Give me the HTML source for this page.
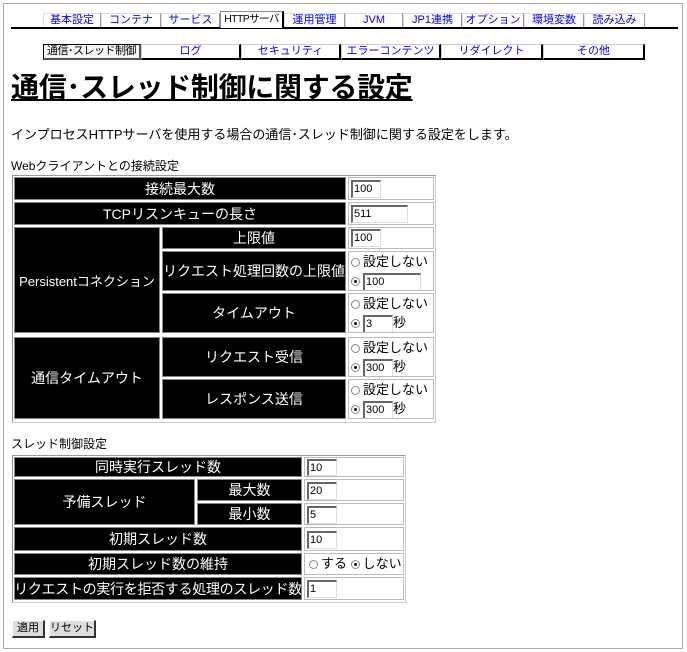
<!DOCTYPE html>
<html><head><meta charset="utf-8">
<style>
*{margin:0;padding:0;box-sizing:border-box}
body{width:687px;height:652px;background:#fff;font-family:"Liberation Sans","Noto Sans CJK JP",sans-serif;position:relative;overflow:hidden;color:#000}
.a{position:absolute}
.frame{left:3px;top:3px;width:680px;height:646px;border:1px solid #aaa}
.tab{position:absolute;top:13px;height:15px;border-top:1px solid #ddd;border-left:1px solid #ddd;border-right:1px solid #999;font-size:11px;color:#00f;text-align:center;line-height:13px;background:#fff;white-space:nowrap;overflow:hidden}
.tab.on{color:#000;top:11px;height:17px;border-top:1px solid #888;border-left:1px solid #888;border-right:2px solid #000;z-index:2;background:#fff;letter-spacing:-0.6px;font-size:10.5px;line-height:15px}
.line{left:11px;top:27px;width:667px;height:2px;background:#000}
.sub{position:absolute;top:44px;height:16px;border-top:1px solid #ccc;border-left:1px solid #ccc;border-right:2px solid #000;border-bottom:2px solid #000;font-size:11px;color:#00f;text-align:center;line-height:13px;white-space:nowrap;overflow:hidden}
.sub.on{color:#000;border:1px solid #000;border-right:2px solid #555;border-bottom:2px solid #555;background:#f4f4f4;letter-spacing:-0.5px}
.L{position:absolute;background:#000;color:#fff;font-size:14px;display:flex;align-items:center;justify-content:center;border:1px solid #888;white-space:nowrap;overflow:hidden}
.V{position:absolute;background:#fff;border:1px solid #bbb;font-size:13px;padding-left:2px;overflow:hidden}
.in{display:inline-block;border-top:2px solid #666;border-left:2px solid #666;border-right:1px solid #ddd;border-bottom:1px solid #ddd;height:18px;font-size:11px;line-height:14px;padding-left:1px;vertical-align:middle;background:#fff}
.r{display:inline-block;width:9px;height:9px;border:1px solid #888;border-radius:50%;margin-right:3px;vertical-align:middle;position:relative}
.r.c::after{content:"";position:absolute;left:2px;top:2px;width:3px;height:3px;background:#000;border-radius:50%}
.ln{height:19px;line-height:19px;white-space:nowrap}
.tb{position:absolute;border:1px solid #999;border-right-color:#ccc;border-bottom-color:#ccc}
.btn{position:absolute;top:620px;height:18px;background:#ddd;border:1px solid #fff;border-right:2px solid #333;border-bottom:2px solid #333;font-size:11px;text-align:center;line-height:15px;white-space:nowrap}
</style></head><body>
<div class="a frame"></div>
<div class="tab" style="left:43px;width:58px">基本設定</div>
<div class="tab" style="left:101px;width:60px">コンテナ</div>
<div class="tab" style="left:161px;width:59px">サービス</div>
<div class="tab on" style="left:220px;width:64px">HTTPサーバ</div>
<div class="tab" style="left:284px;width:61px">運用管理</div>
<div class="tab" style="left:345px;width:58px">JVM</div>
<div class="tab" style="left:403px;width:59px">JP1連携</div>
<div class="tab" style="left:462px;width:62px">オプション</div>
<div class="tab" style="left:524px;width:60px">環境変数</div>
<div class="tab" style="left:584px;width:61px">読み込み</div>
<div class="a line"></div>

<div class="sub on" style="left:43px;width:98px">通信･スレッド制御</div>
<div class="sub" style="left:141px;width:100px">ログ</div>
<div class="sub" style="left:241px;width:100px">セキュリティ</div>
<div class="sub" style="left:341px;width:100px">エラーコンテンツ</div>
<div class="sub" style="left:441px;width:102px">リダイレクト</div>
<div class="sub" style="left:543px;width:102px">その他</div>

<div class="a" style="left:11px;top:70px;font-size:28px;font-weight:bold;text-decoration:underline;line-height:36px;white-space:nowrap;letter-spacing:-0.3px">通信･スレッド制御に関する設定</div>
<div class="a" style="left:11px;top:124px;font-size:13px;white-space:nowrap">インプロセスHTTPサーバを使用する場合の通信･スレッド制御に関する設定をします。</div>
<div class="a" style="left:11px;top:157px;font-size:12px;white-space:nowrap">Webクライアントとの接続設定</div>

<div class="tb" style="left:12px;top:175px;width:424px;height:248px"></div>
<div class="L" style="left:14px;top:177px;width:332px;height:23px">接続最大数</div>
<div class="L" style="left:14px;top:202px;width:332px;height:23px">TCPリスンキューの長さ</div>
<div class="L" style="left:14px;top:227px;width:146px;height:106px;font-size:13px">Persistentコネクション</div>
<div class="L" style="left:162px;top:227px;width:184px;height:22px">上限値</div>
<div class="L" style="left:162px;top:251px;width:184px;height:40px">リクエスト処理回数の上限値</div>
<div class="L" style="left:162px;top:293px;width:184px;height:40px">タイムアウト</div>
<div class="L" style="left:14px;top:337px;width:146px;height:82px">通信タイムアウト</div>
<div class="L" style="left:162px;top:337px;width:184px;height:40px">リクエスト受信</div>
<div class="L" style="left:162px;top:379px;width:184px;height:40px">レスポンス送信</div>

<div class="V" style="left:348px;top:177px;width:86px;height:23px;padding-top:2px"><span class="in" style="width:30px">100</span></div>
<div class="V" style="left:348px;top:202px;width:86px;height:23px;padding-top:2px"><span class="in" style="width:57px">511</span></div>
<div class="V" style="left:348px;top:227px;width:86px;height:22px;padding-top:1px"><span class="in" style="width:30px">100</span></div>
<div class="V" style="left:348px;top:251px;width:86px;height:40px"><div class="ln"><span class="r"></span>設定しない</div><div class="ln"><span class="r c"></span><span class="in" style="width:58px">100</span></div></div>
<div class="V" style="left:348px;top:293px;width:86px;height:40px"><div class="ln"><span class="r"></span>設定しない</div><div class="ln"><span class="r c"></span><span class="in" style="width:30px">3</span>秒</div></div>
<div class="V" style="left:348px;top:337px;width:86px;height:40px"><div class="ln"><span class="r"></span>設定しない</div><div class="ln"><span class="r c"></span><span class="in" style="width:30px">300</span>秒</div></div>
<div class="V" style="left:348px;top:379px;width:86px;height:40px"><div class="ln"><span class="r"></span>設定しない</div><div class="ln"><span class="r c"></span><span class="in" style="width:30px">300</span>秒</div></div>

<div class="a" style="left:11px;top:435px;font-size:12px;white-space:nowrap">スレッド制御設定</div>
<div class="tb" style="left:12px;top:455px;width:394px;height:148px"></div>
<div class="L" style="left:14px;top:457px;width:288px;height:20px">同時実行スレッド数</div>
<div class="L" style="left:14px;top:479px;width:181px;height:46px">予備スレッド</div>
<div class="L" style="left:197px;top:479px;width:105px;height:22px">最大数</div>
<div class="L" style="left:197px;top:503px;width:105px;height:22px">最小数</div>
<div class="L" style="left:14px;top:527px;width:288px;height:24px">初期スレッド数</div>
<div class="L" style="left:14px;top:553px;width:288px;height:22px">初期スレッド数の維持</div>
<div class="L" style="left:14px;top:577px;width:288px;height:23px;letter-spacing:-0.3px">リクエストの実行を拒否する処理のスレッド数</div>

<div class="V" style="left:304px;top:457px;width:100px;height:20px;padding-top:1px"><span class="in" style="width:30px;height:17px">10</span></div>
<div class="V" style="left:304px;top:479px;width:100px;height:22px;padding-top:2px"><span class="in" style="width:30px">20</span></div>
<div class="V" style="left:304px;top:503px;width:100px;height:22px;padding-top:2px"><span class="in" style="width:30px">5</span></div>
<div class="V" style="left:304px;top:527px;width:100px;height:24px;padding-top:3px"><span class="in" style="width:30px">10</span></div>
<div class="V" style="left:304px;top:553px;width:100px;height:22px;line-height:20px;padding-left:4px;white-space:nowrap"><span class="r"></span>する <span class="r c"></span>しない</div>
<div class="V" style="left:304px;top:577px;width:100px;height:23px;padding-top:2px"><span class="in" style="width:30px">1</span></div>

<div class="btn" style="left:12px;width:33px">適用</div>
<div class="btn" style="left:49px;width:47px">リセット</div>
</body></html>
